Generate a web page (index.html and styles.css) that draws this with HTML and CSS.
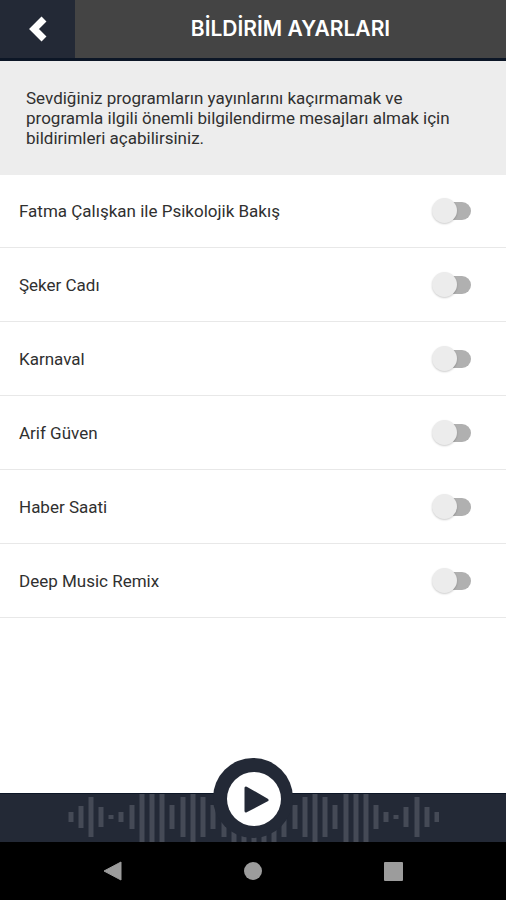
FILE: index.html
```html
<!DOCTYPE html>
<html lang="tr">

<head>
  <meta charset="UTF-8" />
  <meta name="viewport" content="width=device-width, initial-scale=1.0" />
  <title>Bildirim Ayarları</title>
  <link rel="stylesheet" href="styles.css">
</head>

<body>
  <header class="header">
    <button class="back" type="button" aria-label="Geri">
      <svg width="20" height="28" viewBox="0 0 20 28">
        <path d="M16 4L6 14l10 10" />
      </svg>
    </button>
    <h1>BİLDİRİM AYARLARI</h1>
  </header>

  <main>
    <p class="intro">Sevdiğiniz programların yayınlarını kaçırmamak ve programla ilgili önemli bilgilendirme mesajları almak için bildirimleri açabilirsiniz.</p>
    <ul class="programs">
      <li><label for="p1">Fatma Çalışkan ile Psikolojik Bakış</label><input class="switch" type="checkbox" id="p1"></li>
      <li><label for="p2">Şeker Cadı</label><input class="switch" type="checkbox" id="p2"></li>
      <li><label for="p3">Karnaval</label><input class="switch" type="checkbox" id="p3"></li>
      <li><label for="p4">Arif Güven</label><input class="switch" type="checkbox" id="p4"></li>
      <li><label for="p5">Haber Saati</label><input class="switch" type="checkbox" id="p5"></li>
      <li><label for="p6">Deep Music Remix</label><input class="switch" type="checkbox" id="p6"></li>
    </ul>
  </main>

  <footer class="player">
    <svg class="wave" width="372" height="48" viewBox="0 0 372 48">
      <path d="M4 18v10M14 12v22M24 3v40M34 13v20M44 21v4M54 18v10M65 11v24M75 0v48M85 0v48M95 0v48M105 11v24M116 3v40M126 0v48M136 3v40M146 11v24M157 3v40M167 0v48M177 0v48M187 0v48M197 0v48M207 0v48M217 3v40M228 11v24M238 3v40M248 0v48M258 3v40M268 11v24M279 0v48M289 0v48M299 0v48M309 11v24M319 18v10M329 21v4M339 13v20M350 3v40M360 13v20M370 18v10" />
    </svg>
    <button class="play" type="button" aria-label="Oynat">
      <svg width="80" height="80" viewBox="0 0 80 80">
        <circle cx="41" cy="41" r="27" fill="#fff" />
        <path d="M33 30v23l21-11z" fill="#232936" stroke="#232936" stroke-width="3" stroke-linejoin="round" />
      </svg>
    </button>
  </footer>

  <nav class="system-nav">
    <button type="button" aria-label="Geri">
      <svg width="20" height="20" viewBox="0 0 20 20"><path d="M18 1v18L1 10z" stroke="#9c9c9c" stroke-linejoin="round" /></svg>
    </button>
    <button type="button" aria-label="Ana ekran">
      <svg width="20" height="20" viewBox="0 0 20 20"><circle cx="10" cy="10" r="9" /></svg>
    </button>
    <button type="button" aria-label="Son uygulamalar">
      <svg width="20" height="20" viewBox="0 0 20 20"><rect x="1" y="1" width="19" height="19" rx="1" /></svg>
    </button>
  </nav>
</body>

</html>
```
FILE: styles.css
```css
* {
  box-sizing: border-box;
}

body {
  margin: 0;
  min-height: 100vh;
  display: flex;
  flex-direction: column;
  background: #fff;
  color: #303030;
  font-family: Roboto, "Liberation Sans", sans-serif;
  font-size: 17px;
  line-height: 20px;
}

button {
  padding: 0;
  border: none;
  background: none;
  cursor: pointer;
}

svg {
  display: block;
}

main {
  flex: 1;
}

.header {
  display: flex;
  height: 61px;
  background: #444;
  border-bottom: 3px solid #0c1626;
}

.header h1 {
  flex: 1;
  margin: 0;
  color: #fff;
  font-family: Inter, sans-serif;
  font-size: 21px;
  font-weight: 600;
  line-height: 58px;
  text-align: center;
}

.back {
  width: 75px;
  display: flex;
  align-items: center;
  justify-content: center;
  background: #232936;
}

.back path {
  fill: none;
  stroke: #fff;
  stroke-width: 7;
}

.intro {
  margin: 0;
  padding: 27px 26px;
  background: #ededed;
}

.programs {
  margin: 0;
  padding: 0;
  list-style: none;
}

.programs li {
  display: flex;
  align-items: center;
  height: 74px;
  padding: 0 35px 0 19px;
  border-bottom: 1px solid #e8e8e8;
}

.programs li:first-child {
  height: 73px;
}

.programs label {
  flex: 1;
}

.switch {
  appearance: none;
  position: relative;
  width: 34px;
  height: 18px;
  margin: 0;
  border-radius: 9px;
  background: #b0b0b0;
  cursor: pointer;
}

.switch::before {
  content: "";
  position: absolute;
  top: -4px;
  left: -5px;
  width: 25px;
  height: 25px;
  border-radius: 50%;
  background: #ececec;
  box-shadow: 0 1px 2px rgba(0, 0, 0, 0.2);
}

.switch:checked::before {
  left: 14px;
}

.player {
  position: relative;
  display: flex;
  justify-content: center;
  height: 49px;
  background: #232936;
  border-top: 1px solid #0c1626;
}

.wave {
  fill: none;
  stroke: #454a56;
  stroke-width: 5;
}

/* yarısı çubuğun üstüne taşıyor */
.play {
  position: absolute;
  left: 50%;
  bottom: 4px;
  transform: translateX(-50%);
  border-radius: 50%;
  background: #232936;
}

.system-nav {
  display: flex;
  justify-content: center;
  align-items: center;
  gap: 120px;
  height: 58px;
  background: #000;
}

.system-nav svg {
  fill: #9c9c9c;
}
```
